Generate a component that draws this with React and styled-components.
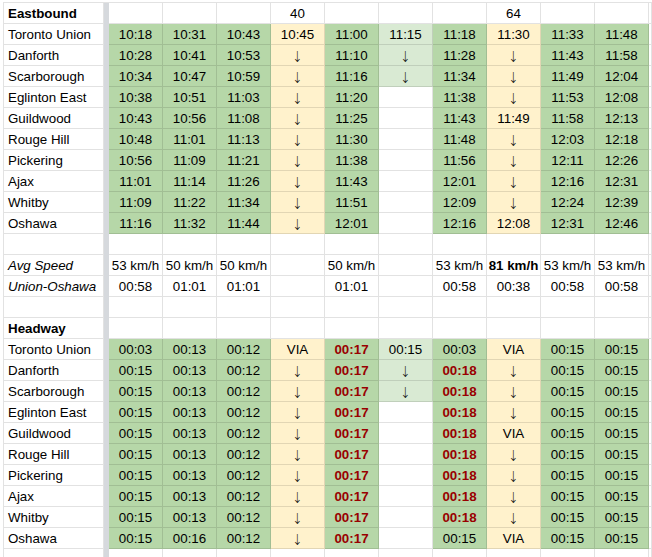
import React from 'react'
import styled, { createGlobalStyle } from 'styled-components'

const GlobalStyle = createGlobalStyle`
  body {
    margin: 0;
    background: #fff;
    font-family: "Liberation Sans", Arial, sans-serif;
  }
`

const FILLS = {
  g: '#b6d7a8',
  l: '#d9ead3',
  y: '#fff2cc',
  w: '#ffffff',
}

// column fills for timetable rows
const EAST_FILL = ['g', 'g', 'g', 'y', 'g', 'l', 'g', 'y', 'g', 'g']

const stations = [
  'Toronto Union', 'Danforth', 'Scarborough', 'Eglinton East', 'Guildwood',
  'Rouge Hill', 'Pickering', 'Ajax', 'Whitby', 'Oshawa',
]

const D = '↓'

const eastTimes = [
  ['10:18', '10:31', '10:43', '10:45', '11:00', '11:15', '11:18', '11:30', '11:33', '11:48'],
  ['10:28', '10:41', '10:53', D, '11:10', D, '11:28', D, '11:43', '11:58'],
  ['10:34', '10:47', '10:59', D, '11:16', D, '11:34', D, '11:49', '12:04'],
  ['10:38', '10:51', '11:03', D, '11:20', '', '11:38', D, '11:53', '12:08'],
  ['10:43', '10:56', '11:08', D, '11:25', '', '11:43', '11:49', '11:58', '12:13'],
  ['10:48', '11:01', '11:13', D, '11:30', '', '11:48', D, '12:03', '12:18'],
  ['10:56', '11:09', '11:21', D, '11:38', '', '11:56', D, '12:11', '12:26'],
  ['11:01', '11:14', '11:26', D, '11:43', '', '12:01', D, '12:16', '12:31'],
  ['11:09', '11:22', '11:34', D, '11:51', '', '12:09', D, '12:24', '12:39'],
  ['11:16', '11:32', '11:44', D, '12:01', '', '12:16', '12:08', '12:31', '12:46'],
]

const headways = [
  ['00:03', '00:13', '00:12', 'VIA', '00:17', '00:15', '00:03', 'VIA', '00:15', '00:15'],
  ['00:15', '00:13', '00:12', D, '00:17', D, '00:18', D, '00:15', '00:15'],
  ['00:15', '00:13', '00:12', D, '00:17', D, '00:18', D, '00:15', '00:15'],
  ['00:15', '00:13', '00:12', D, '00:17', '', '00:18', D, '00:15', '00:15'],
  ['00:15', '00:13', '00:12', D, '00:17', '', '00:18', 'VIA', '00:15', '00:15'],
  ['00:15', '00:13', '00:12', D, '00:17', '', '00:18', D, '00:15', '00:15'],
  ['00:15', '00:13', '00:12', D, '00:17', '', '00:18', D, '00:15', '00:15'],
  ['00:15', '00:13', '00:12', D, '00:17', '', '00:18', D, '00:15', '00:15'],
  ['00:15', '00:13', '00:12', D, '00:17', '', '00:18', D, '00:15', '00:15'],
  ['00:15', '00:16', '00:12', D, '00:17', '', '00:15', 'VIA', '00:15', '00:15'],
]

const blank = Array(10).fill('')

const Wrap = styled.div`
  padding: 2px 0 0 3px;
  height: 557px;
  overflow: hidden;
  box-sizing: border-box;
`

const Sheet = styled.div`
  display: grid;
  grid-template-columns: 100px 5px repeat(10, 54px) 1fr;
  grid-auto-rows: 21px;
  border-top: 1px solid #e2e2e2;
  border-left: 1px solid #e2e2e2;
  font-size: 13.33px;
  color: #000;
`

const Cell = styled.div`
  box-sizing: border-box;
  border-right: 1px solid rgba(0, 0, 0, 0.115);
  border-bottom: 1px solid rgba(0, 0, 0, 0.115);
  background: ${p => FILLS[p.$fill] || '#fff'};
  display: flex;
  align-items: center;
  justify-content: ${p => (p.$label ? 'flex-start' : 'center')};
  padding-left: ${p => (p.$label ? '4px' : '0')};
  padding-top: 1px;
  white-space: nowrap;
  overflow: hidden;
  font-weight: ${p => (p.$bold ? 700 : 400)};
  font-style: ${p => (p.$italic ? 'italic' : 'normal')};
  color: ${p => (p.$red ? '#990000' : '#000')};
`

const Arrow = styled.span`
  font-family: "DejaVu Sans", sans-serif;
  font-size: 15px;
  font-weight: 200;
  line-height: 1;
  transform: translateY(2px) scaleX(0.8);
`

const Frozen = styled.div`
  background: #d6d9dd;
`

const Row = ({ label, values, fills, labelBold, labelItalic, boldCols = [], redCols = [] }) => (
  <>
    <Cell $label $bold={labelBold} $italic={labelItalic}>{label}</Cell>
    <Frozen />
    {values.map((v, i) => {
      const fill = fills ? (fills[i] === 'l' && v === '' ? 'w' : fills[i]) : 'w'
      return (
        <Cell key={i} $fill={fill} $bold={boldCols.includes(i)} $red={redCols.includes(i)}>
          {v === D ? <Arrow>{D}</Arrow> : v}
        </Cell>
      )
    })}
    <Cell />
  </>
)

const App = () => (
  <Wrap>
    <GlobalStyle />
    <Sheet>
      <Row label="Eastbound" labelBold values={['', '', '', '40', '', '', '', '64', '', '']} />
      {stations.map((s, i) => (
        <Row key={s} label={s} values={eastTimes[i]} fills={EAST_FILL} />
      ))}
      <Row label="" values={blank} />
      <Row
        label="Avg Speed"
        labelItalic
        values={['53 km/h', '50 km/h', '50 km/h', '', '50 km/h', '', '53 km/h', '81 km/h', '53 km/h', '53 km/h']}
        boldCols={[7]}
      />
      <Row
        label="Union-Oshawa"
        labelItalic
        values={['00:58', '01:01', '01:01', '', '01:01', '', '00:58', '00:38', '00:58', '00:58']}
      />
      <Row label="" values={blank} />
      <Row label="Headway" labelBold values={blank} />
      {stations.map((s, i) => (
        <Row
          key={'h' + s}
          label={s}
          values={headways[i]}
          fills={EAST_FILL}
          boldCols={i === 0 || i === 9 ? [4] : [4, 6]}
          redCols={i === 0 || i === 9 ? [4] : [4, 6]}
        />
      ))}
      <Row label="" values={blank} />
    </Sheet>
  </Wrap>
)

export default App
